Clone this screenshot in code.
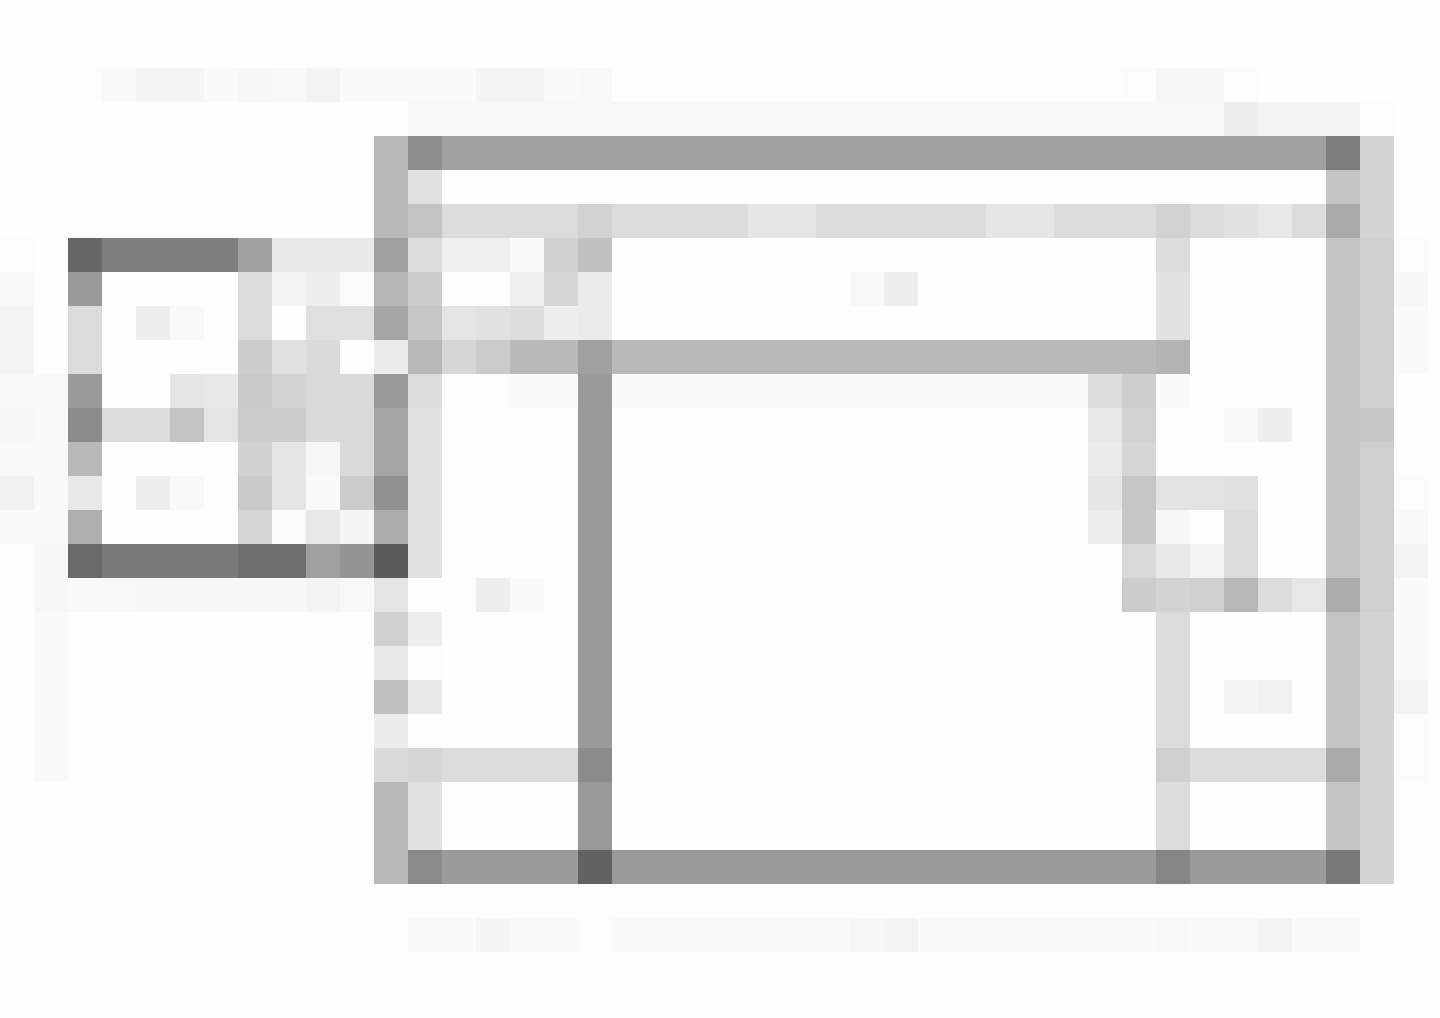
const CELL = 34;

// [column, row, columns wide, rows high, grey level]
type Block = [number, number, number, number, number];

const annotations: Block[] = [
  // above the plan
  [2, 2, 1, 1, 253],
  [3, 2, 1, 1, 250],
  [4, 2, 2, 1, 245],
  [6, 2, 1, 1, 250],
  [7, 2, 1, 1, 247],
  [8, 2, 1, 1, 249],
  [9, 2, 1, 1, 243],
  [10, 2, 4, 1, 250],
  [14, 2, 2, 1, 245],
  [16, 2, 1, 1, 250],
  [17, 2, 1, 1, 248],
  [33, 2, 1, 1, 252],
  [34, 2, 2, 1, 247],
  [36, 2, 1, 1, 252],
  [12, 3, 24, 1, 248],
  [36, 3, 1, 1, 237],
  [37, 3, 3, 1, 243],
  [40, 3, 1, 1, 252],
  // left margin
  [2, 6, 6, 1, 253],
  [0, 7, 1, 1, 252],
  [0, 8, 1, 1, 249],
  [0, 9, 1, 2, 244],
  [0, 11, 2, 5, 249],
  [0, 12, 1, 1, 247],
  [0, 14, 1, 1, 241],
  [0, 15, 1, 1, 250],
  [0, 16, 1, 1, 253],
  [1, 16, 1, 2, 246],
  [1, 18, 1, 5, 250],
  [2, 17, 2, 1, 249],
  [4, 17, 5, 1, 247],
  [9, 17, 1, 1, 243],
  [10, 17, 1, 1, 248],
  // right margin
  [41, 7, 1, 1, 252],
  [41, 8, 1, 1, 247],
  [41, 9, 1, 2, 250],
  [41, 14, 1, 1, 252],
  [41, 15, 1, 1, 249],
  [41, 16, 1, 1, 243],
  [41, 17, 1, 3, 250],
  [41, 20, 1, 1, 243],
  [41, 21, 1, 2, 252],
  // below the plan
  [12, 26, 28, 1, 253],
  [12, 27, 28, 1, 250],
  [14, 27, 1, 1, 245],
  [17, 27, 1, 1, 252],
  [25, 27, 1, 1, 246],
  [26, 27, 1, 1, 243],
  [34, 27, 1, 1, 248],
  [36, 27, 1, 1, 248],
  [37, 27, 1, 1, 243],
];

const annex: Block[] = [
  [2, 7, 1, 1, 102],
  [3, 7, 4, 1, 125],
  [7, 7, 1, 1, 161],
  [8, 7, 3, 1, 233],
  [2, 8, 1, 1, 154],
  [2, 9, 1, 2, 219],
  [2, 11, 1, 1, 154],
  [2, 12, 1, 1, 140],
  [2, 13, 1, 1, 184],
  [2, 14, 1, 1, 232],
  [2, 15, 1, 1, 174],
  [7, 8, 1, 2, 219],
  [8, 8, 1, 1, 244],
  [9, 8, 1, 1, 238],
  [10, 8, 1, 1, 251],
  [9, 9, 2, 1, 224],
  [4, 9, 1, 1, 238],
  [5, 9, 1, 1, 249],
  [7, 10, 1, 1, 204],
  [8, 10, 1, 1, 224],
  [9, 10, 1, 1, 218],
  [5, 11, 1, 1, 228],
  [6, 11, 1, 1, 231],
  [7, 11, 1, 1, 201],
  [8, 11, 1, 1, 211],
  [9, 11, 2, 2, 217],
  [3, 12, 2, 1, 220],
  [5, 12, 1, 1, 195],
  [6, 12, 1, 1, 228],
  [7, 12, 2, 1, 203],
  [7, 13, 1, 1, 209],
  [8, 13, 1, 2, 229],
  [9, 13, 1, 1, 246],
  [10, 13, 1, 1, 217],
  [4, 14, 1, 1, 238],
  [5, 14, 1, 1, 249],
  [7, 14, 1, 1, 202],
  [9, 14, 1, 1, 250],
  [10, 14, 1, 1, 203],
  [7, 15, 1, 1, 213],
  [8, 15, 1, 1, 251],
  [9, 15, 1, 1, 232],
  [10, 15, 1, 1, 245],
  [2, 16, 1, 1, 106],
  [3, 16, 4, 1, 122],
  [7, 16, 2, 1, 111],
  [9, 16, 1, 1, 159],
  [10, 16, 1, 1, 148],
];

const outerWalls: Block[] = [
  // left
  [11, 4, 1, 3, 183],
  [11, 7, 1, 1, 159],
  [11, 8, 1, 1, 182],
  [11, 9, 1, 1, 166],
  [11, 10, 1, 1, 235],
  [11, 11, 1, 1, 153],
  [11, 12, 1, 2, 166],
  [11, 14, 1, 1, 145],
  [11, 15, 1, 1, 173],
  [11, 16, 1, 1, 91],
  [11, 17, 1, 1, 228],
  [11, 18, 1, 1, 209],
  [11, 19, 1, 1, 233],
  [11, 20, 1, 1, 193],
  [11, 21, 1, 1, 235],
  [11, 22, 1, 1, 218],
  [11, 23, 1, 3, 184],
  [12, 5, 1, 1, 224],
  [12, 6, 1, 1, 195],
  [12, 7, 1, 1, 219],
  [12, 8, 1, 1, 205],
  [12, 9, 1, 1, 198],
  [12, 10, 1, 1, 184],
  [12, 11, 1, 1, 220],
  [12, 12, 1, 5, 225],
  [12, 17, 1, 1, 253],
  [12, 18, 1, 1, 238],
  [12, 19, 1, 1, 252],
  [12, 20, 1, 1, 232],
  [12, 21, 1, 1, 253],
  [12, 22, 1, 1, 214],
  [12, 23, 1, 2, 225],
  // top
  [12, 4, 1, 1, 141],
  [13, 4, 26, 1, 161],
  [39, 4, 1, 1, 125],
  // right
  [39, 5, 1, 20, 197],
  [39, 6, 1, 1, 170],
  [39, 17, 1, 1, 171],
  [39, 22, 1, 1, 170],
  [40, 4, 1, 3, 211],
  [40, 7, 1, 11, 207],
  [40, 12, 1, 1, 199],
  [40, 18, 1, 8, 212],
  // bottom
  [12, 25, 1, 1, 138],
  [13, 25, 26, 1, 155],
  [17, 25, 1, 1, 98],
  [34, 25, 1, 1, 134],
  [39, 25, 1, 1, 120],
];

const innerWalls: Block[] = [
  [13, 6, 26, 1, 220],
  [17, 6, 1, 1, 210],
  [22, 6, 2, 1, 230],
  [29, 6, 2, 1, 230],
  [34, 6, 1, 1, 210],
  [36, 6, 1, 1, 226],
  [37, 6, 1, 1, 232],
  [13, 7, 2, 1, 239],
  [15, 7, 1, 1, 250],
  [16, 7, 1, 1, 209],
  [17, 7, 1, 1, 193],
  [15, 8, 1, 1, 239],
  [16, 8, 1, 1, 213],
  [17, 8, 1, 2, 235],
  [13, 9, 1, 1, 228],
  [14, 9, 1, 1, 225],
  [15, 9, 1, 1, 220],
  [16, 9, 1, 1, 238],
  [13, 10, 1, 1, 214],
  [14, 10, 1, 1, 203],
  [15, 10, 19, 1, 185],
  [17, 10, 1, 1, 160],
  [34, 10, 1, 1, 179],
  [13, 11, 2, 1, 252],
  [15, 11, 20, 1, 250],
  [17, 11, 1, 14, 154],
  [17, 22, 1, 1, 140],
  [13, 22, 4, 1, 220],
  [34, 7, 1, 1, 220],
  [34, 8, 1, 2, 226],
  [32, 11, 1, 1, 219],
  [33, 11, 1, 1, 206],
  [32, 12, 1, 1, 232],
  [33, 12, 1, 1, 210],
  [32, 13, 1, 1, 235],
  [33, 13, 1, 1, 214],
  [32, 14, 1, 1, 230],
  [32, 15, 1, 1, 238],
  [33, 14, 1, 2, 198],
  [34, 14, 2, 1, 227],
  [36, 14, 1, 1, 224],
  [34, 15, 1, 1, 246],
  [36, 15, 1, 2, 219],
  [33, 16, 1, 1, 217],
  [34, 16, 1, 1, 233],
  [35, 16, 1, 1, 244],
  [33, 17, 1, 1, 204],
  [34, 17, 1, 1, 211],
  [35, 17, 1, 1, 208],
  [36, 17, 1, 1, 183],
  [37, 17, 1, 1, 220],
  [38, 17, 1, 1, 231],
  [34, 18, 1, 7, 220],
  [34, 22, 1, 1, 207],
  [35, 22, 4, 1, 220],
];

const roomLabels: Block[] = [
  [25, 8, 1, 1, 248],
  [26, 8, 1, 1, 238],
  [36, 12, 1, 1, 248],
  [37, 12, 1, 1, 238],
  [13, 17, 1, 1, 253],
  [14, 17, 1, 1, 238],
  [15, 17, 1, 1, 250],
  [14, 18, 2, 1, 253],
  [36, 20, 1, 1, 245],
  [37, 20, 1, 1, 240],
];

function Blocks({ blocks }: { blocks: Block[] }) {
  return (
    <g>
      {blocks.map(([col, row, cols, rows, level]) => (
        <rect
          key={`${col}-${row}`}
          x={col * CELL}
          y={row * CELL}
          width={cols * CELL}
          height={rows * CELL}
          fill={`rgb(${level}, ${level}, ${level})`}
        />
      ))}
    </g>
  );
}

export default function App() {
  return (
    <main className="min-h-screen bg-[#fefefe]">
      <svg
        viewBox="0 0 1440 1018"
        shapeRendering="crispEdges"
        role="img"
        aria-label="Floor plan"
        className="block w-full"
      >
        <Blocks blocks={annotations} />
        <Blocks blocks={annex} />
        <Blocks blocks={outerWalls} />
        <Blocks blocks={innerWalls} />
        <Blocks blocks={roomLabels} />
      </svg>
    </main>
  );
}
